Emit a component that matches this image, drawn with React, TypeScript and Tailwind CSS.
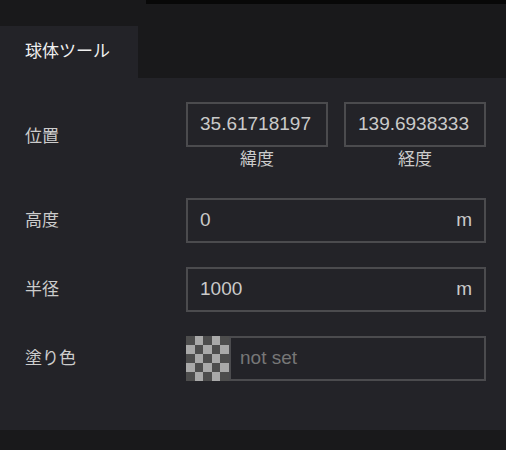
const font = { fontFamily: '"Liberation Sans", "Noto Sans CJK JP", sans-serif' };

function Field({ value, unit }: { value: string; unit?: string }) {
  return (
    <div className="flex h-[45px] w-full min-w-0 flex-1 items-center justify-between overflow-hidden border-2 border-[#4b4b4e] pl-[12px] pr-[12px] text-[19px] text-[#cacaca]">
      <span className="whitespace-nowrap">{value}</span>
      {unit && <span className="ml-2">{unit}</span>}
    </div>
  );
}

function Checker() {
  const cells = [];
  for (let r = 0; r < 5; r++) {
    for (let c = 0; c < 5; c++) {
      cells.push(
        <div key={`${r}-${c}`} className={(r + c) % 2 === 0 ? 'bg-[#4d4d4d]' : 'bg-[#a9a9a9]'} />
      );
    }
  }
  return <div className="grid h-[45px] w-[43px] shrink-0 grid-cols-5 grid-rows-5">{cells}</div>;
}

export default function App() {
  return (
    <div className="flex h-[450px] w-[506px] flex-col bg-[#19191b]" style={font}>
      <div className="flex h-[26px] shrink-0">
        <div className="w-[146px]" />
        <div className="h-[4px] flex-1 bg-[#080808]" />
      </div>
      <div className="flex h-[52px] w-[138px] shrink-0 items-center bg-[#232328] pl-[25px] text-[17px] text-[#f0f0f0]">
        球体ツール
      </div>
      <div className="flex h-[352px] shrink-0 flex-col bg-[#232328] pr-[20px] text-[17px] text-[#cccccc]">
        <div className="mt-[24px] flex items-center">
          <div className="w-[186px] pl-[25px]">位置</div>
          <div className="flex flex-1 gap-[16px]">
            <div className="flex min-w-0 flex-1 flex-col items-center">
              <div className="flex h-[45px] w-full">
                <Field value="35.61718197" />
              </div>
              <span className="mt-[1px] leading-[24px]">緯度</span>
            </div>
            <div className="flex min-w-0 flex-1 flex-col items-center">
              <div className="flex h-[45px] w-full">
                <Field value="139.6938333" />
              </div>
              <span className="mt-[1px] leading-[24px]">経度</span>
            </div>
          </div>
        </div>
        <div className="mt-[26px] flex items-center">
          <div className="w-[186px] pl-[25px]">高度</div>
          <Field value="0" unit="m" />
        </div>
        <div className="mt-[24px] flex items-center">
          <div className="w-[186px] pl-[25px]">半径</div>
          <Field value="1000" unit="m" />
        </div>
        <div className="mt-[24px] flex items-center">
          <div className="w-[186px] pl-[25px]">塗り色</div>
          <Checker />
          <div className="flex h-[45px] flex-1 items-center border-2 border-[#4b4b4e] px-[9px] text-[19px] text-[#777777]">
            not set
          </div>
        </div>
      </div>
    </div>
  );
}
